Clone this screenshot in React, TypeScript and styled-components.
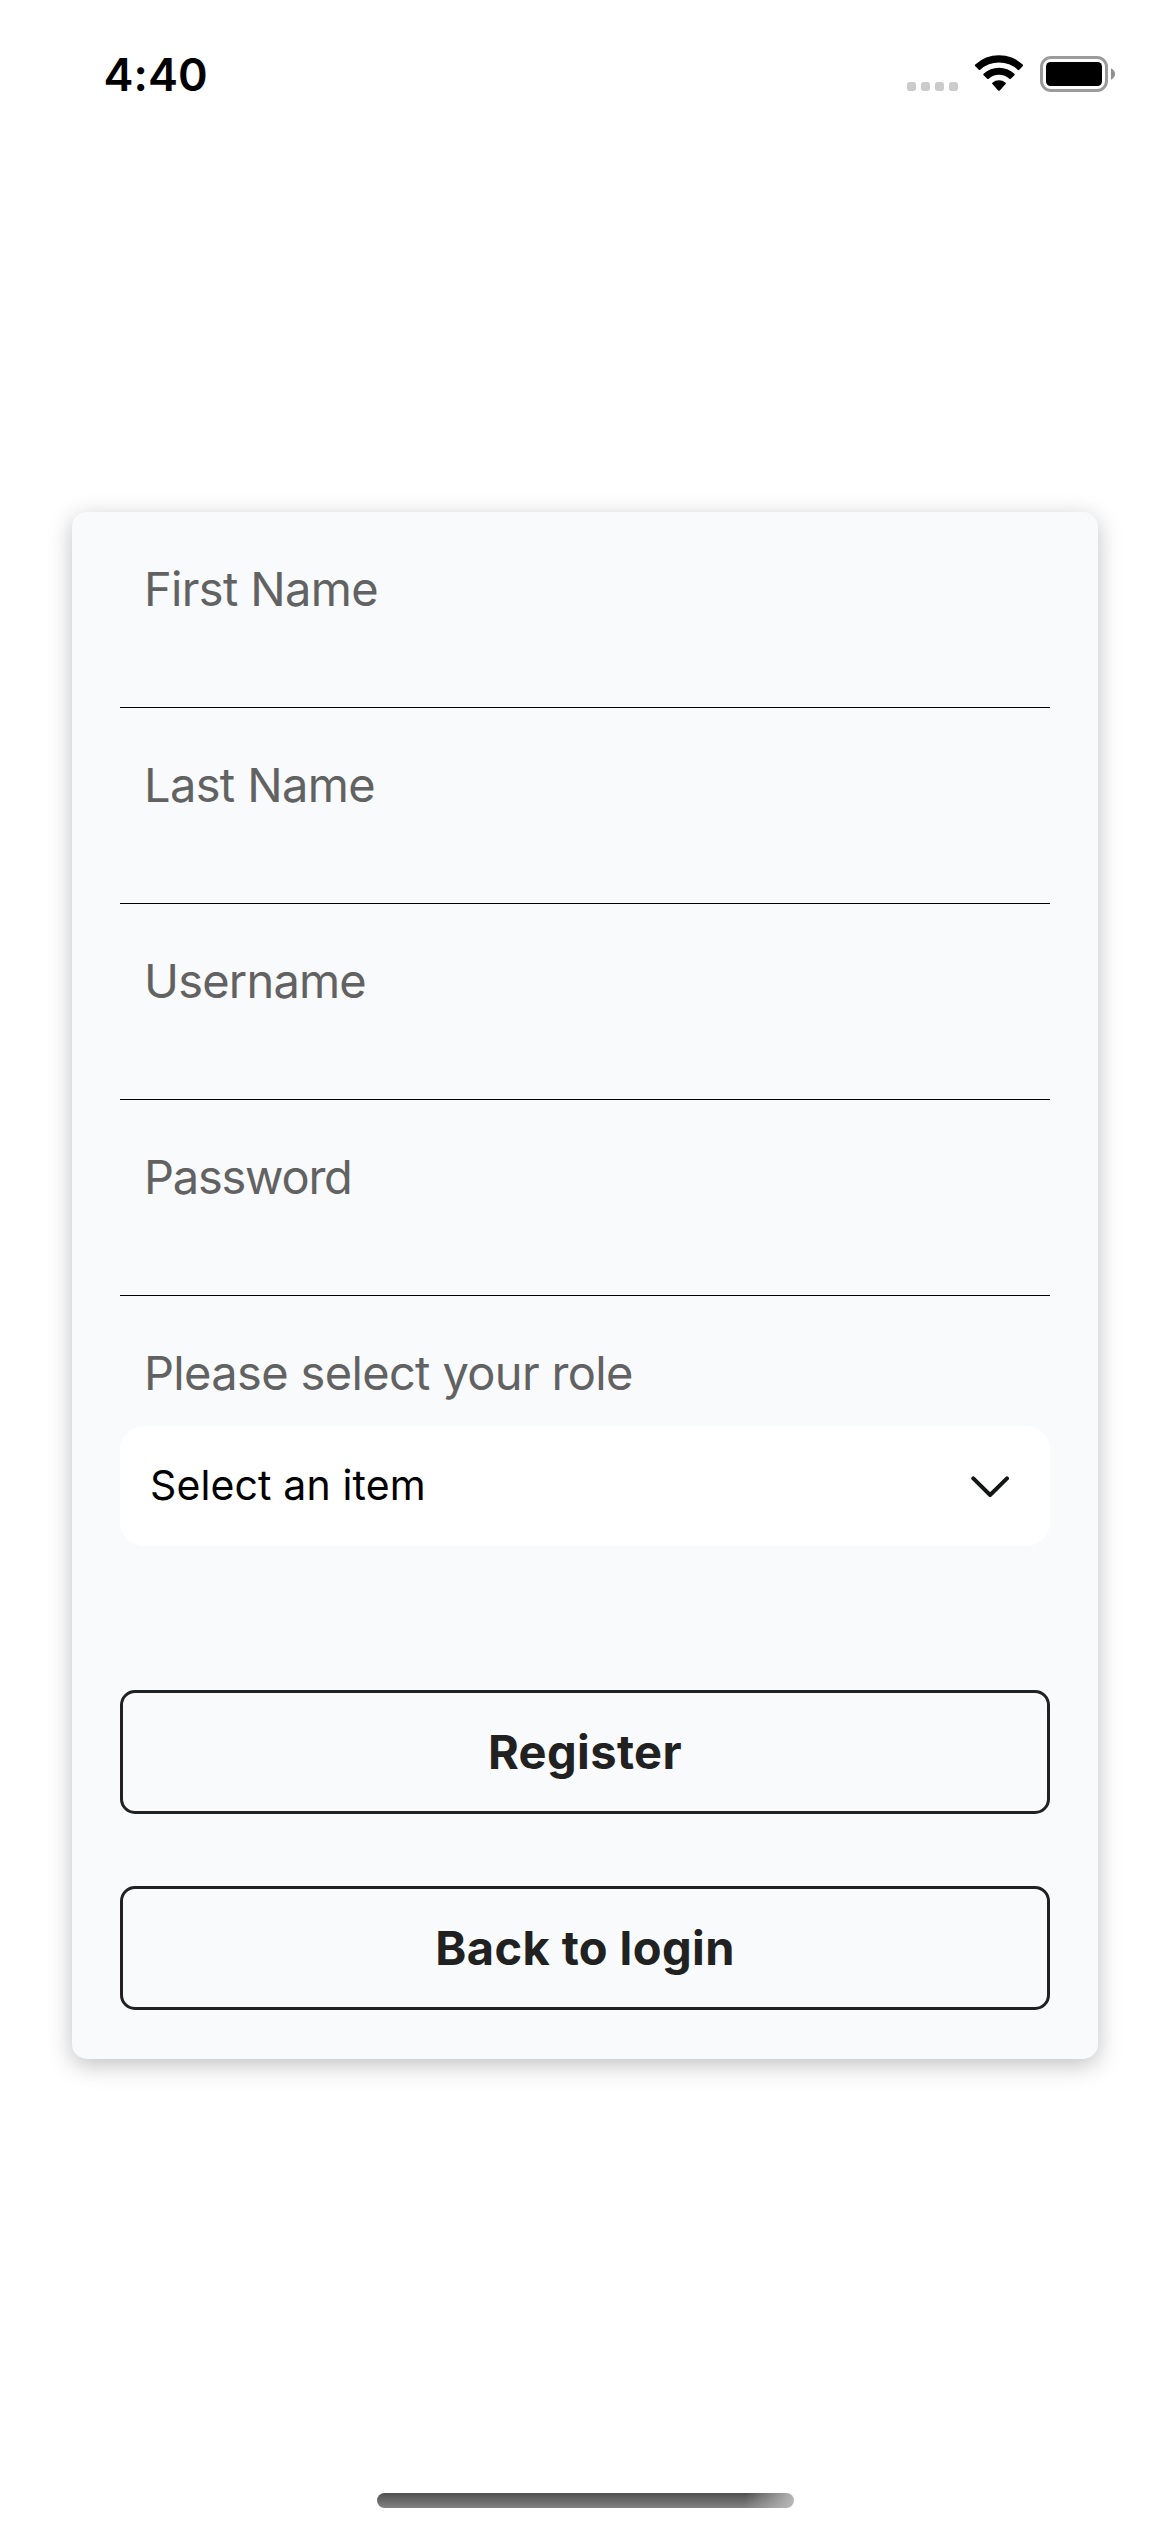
import React from "react";
import styled, { createGlobalStyle } from "styled-components";

const GlobalStyle = createGlobalStyle`
  * { box-sizing: border-box; }
  html, body { margin: 0; padding: 0; background: #ffffff; }
  button, input { font-family: inherit; }
`;

const Screen = styled.div`
  width: 1170px;
  height: 2532px;
  display: flex;
  flex-direction: column;
  background: #ffffff;
  font-family: Inter, "Liberation Sans", sans-serif;
  overflow: hidden;
`;

const StatusBar = styled.header`
  height: 141px;
  flex: none;
  display: flex;
  justify-content: space-between;
  align-items: flex-start;
  padding: 46px 54px 0 103.5px;
`;

const Time = styled.span`
  font-size: 45px;
  line-height: 58px;
  font-weight: 600;
  letter-spacing: 0.1px;
  color: #000000;
`;

const Indicators = styled.div`
  display: flex;
  align-items: flex-start;
  padding-top: 8px;
  svg { display: block; }
`;

const Main = styled.main`
  flex: 1;
  display: flex;
  flex-direction: column;
  padding: 371px 72px 0;
`;

const Card = styled.form`
  display: flex;
  flex-direction: column;
  margin: 0;
  padding: 0 48px 49px;
  background: #f8fafc;
  border-radius: 15px;
  box-shadow: 0 6px 23px rgba(0, 0, 0, 0.25);
`;

const Field = styled.div`
  height: 196px;
  display: flex;
  flex-direction: column;
  padding-top: 48px;
  border-bottom: 1px solid #000000;
`;

const Label = styled.label<{ $spacing: number }>`
  padding-left: 24px;
  font-size: 47px;
  line-height: 58px;
  font-weight: 400;
  letter-spacing: ${(p) => p.$spacing}px;
  color: #626262;
  white-space: nowrap;
`;

const TextInput = styled.input`
  flex: 1;
  min-height: 0;
  width: 100%;
  border: 0;
  outline: 0;
  padding: 0 24px;
  background: transparent;
  font-size: 42px;
`;

const RoleField = styled.div`
  display: flex;
  flex-direction: column;
  gap: 24px;
  padding-top: 48px;
`;

const Select = styled.button`
  height: 120px;
  display: flex;
  align-items: center;
  justify-content: space-between;
  border: 0;
  border-radius: 24px;
  padding: 0 40px 0 30px;
  background: #ffffff;
  color: #000000;
  font-size: 41px;
  line-height: 50px;
  letter-spacing: 0.13px;
  text-align: left;
`;

const SelectValue = styled.span`
  padding-bottom: 2px;
`;

const Actions = styled.div`
  display: flex;
  flex-direction: column;
  gap: 72px;
  margin-top: 144px;
`;

const Button = styled.button`
  height: 124px;
  padding: 0;
  border: 3px solid #212121;
  border-radius: 15px;
  background: transparent;
  color: #212121;
  font-size: 47px;
  line-height: 58px;
  font-weight: 700;
  letter-spacing: 0.4px;
`;

const HomeArea = styled.footer`
  display: flex;
  justify-content: center;
  padding: 0 0 24px 1px;
`;

const HomeIndicator = styled.div`
  width: 417px;
  height: 15px;
  border-radius: 8px;
  background:
    linear-gradient(100deg, rgba(190, 190, 190, 0) 88%, rgba(190, 190, 190, 0.95) 100%),
    linear-gradient(180deg, #505050, #828282);
`;

const fields = [
  { id: "first", label: "First Name", spacing: -0.65 },
  { id: "last", label: "Last Name", spacing: -0.64 },
  { id: "user", label: "Username", spacing: -0.8 },
  { id: "pass", label: "Password", spacing: -1.24 },
];

function StatusIcons() {
  return (
    <svg width="210" height="40" viewBox="0 0 210 40" aria-hidden="true">
      <g fill="#cbcbcb">
        <rect x="1" y="28" width="9" height="9" rx="2.7" />
        <rect x="15" y="28" width="9" height="9" rx="2.7" />
        <rect x="29" y="28" width="9" height="9" rx="2.7" />
        <rect x="43" y="28" width="9" height="9" rx="2.7" />
      </g>
      <g fill="#000000">
        <path d="M69.3 10.6 A34.5 34.5 0 0 1 116.7 10.6 Q117.5 11.4 116.7 12.2 L113.2 15.8 Q112.5 16.5 111.7 15.8 A27.5 27.5 0 0 0 74.3 15.8 Q73.5 16.5 72.8 15.8 L69.3 12.2 Q68.5 11.4 69.3 10.6 Z" />
        <path d="M77.6 19.8 A22.5 22.5 0 0 1 108.4 19.8 Q109.1 20.6 108.4 21.3 L104.8 24.7 Q104.1 25.3 103.3 24.7 A15.3 15.3 0 0 0 82.7 24.7 Q81.9 25.3 81.2 24.7 L77.6 21.3 Q76.9 20.6 77.6 19.8 Z" />
        <path d="M86.4 28.7 A10.3 10.3 0 0 1 99.6 28.7 Q100.3 29.4 99.6 30.1 L93.8 36.4 Q93 37.2 92.2 36.4 L86.4 30.1 Q85.7 29.4 86.4 28.7 Z" />
      </g>
      <rect x="135.5" y="3.5" width="65" height="33" rx="9.5" fill="none" stroke="#9b9b9b" strokeWidth="3" />
      <rect x="140" y="8" width="56" height="24" rx="4.5" fill="#000000" />
      <path d="M205 14.3 Q209 16.6 209 20 Q209 23.4 205 25.7 Z" fill="#8f8f8f" />
    </svg>
  );
}

function Chevron() {
  return (
    <svg width="40" height="22" viewBox="0 0 40 22" fill="none" aria-hidden="true">
      <path d="M3.3 3.4 L20.1 20 L37 3.4" stroke="#141616" strokeWidth="4" strokeLinecap="round" strokeLinejoin="round" />
    </svg>
  );
}

export default function App() {
  return (
    <Screen>
      <GlobalStyle />
      <StatusBar>
        <Time>4:40</Time>
        <Indicators>
          <StatusIcons />
        </Indicators>
      </StatusBar>
      <Main>
        <Card onSubmit={(e) => e.preventDefault()}>
          {fields.map((f) => (
            <Field key={f.id}>
              <Label htmlFor={f.id} $spacing={f.spacing}>{f.label}</Label>
              <TextInput id={f.id} type={f.id === "pass" ? "password" : "text"} />
            </Field>
          ))}
          <RoleField>
            <Label as="span" $spacing={-0.65}>Please select your role</Label>
            <Select type="button">
              <SelectValue>Select an item</SelectValue>
              <Chevron />
            </Select>
          </RoleField>
          <Actions>
            <Button type="submit">Register</Button>
            <Button type="button">Back to login</Button>
          </Actions>
        </Card>
      </Main>
      <HomeArea>
        <HomeIndicator />
      </HomeArea>
    </Screen>
  );
}
